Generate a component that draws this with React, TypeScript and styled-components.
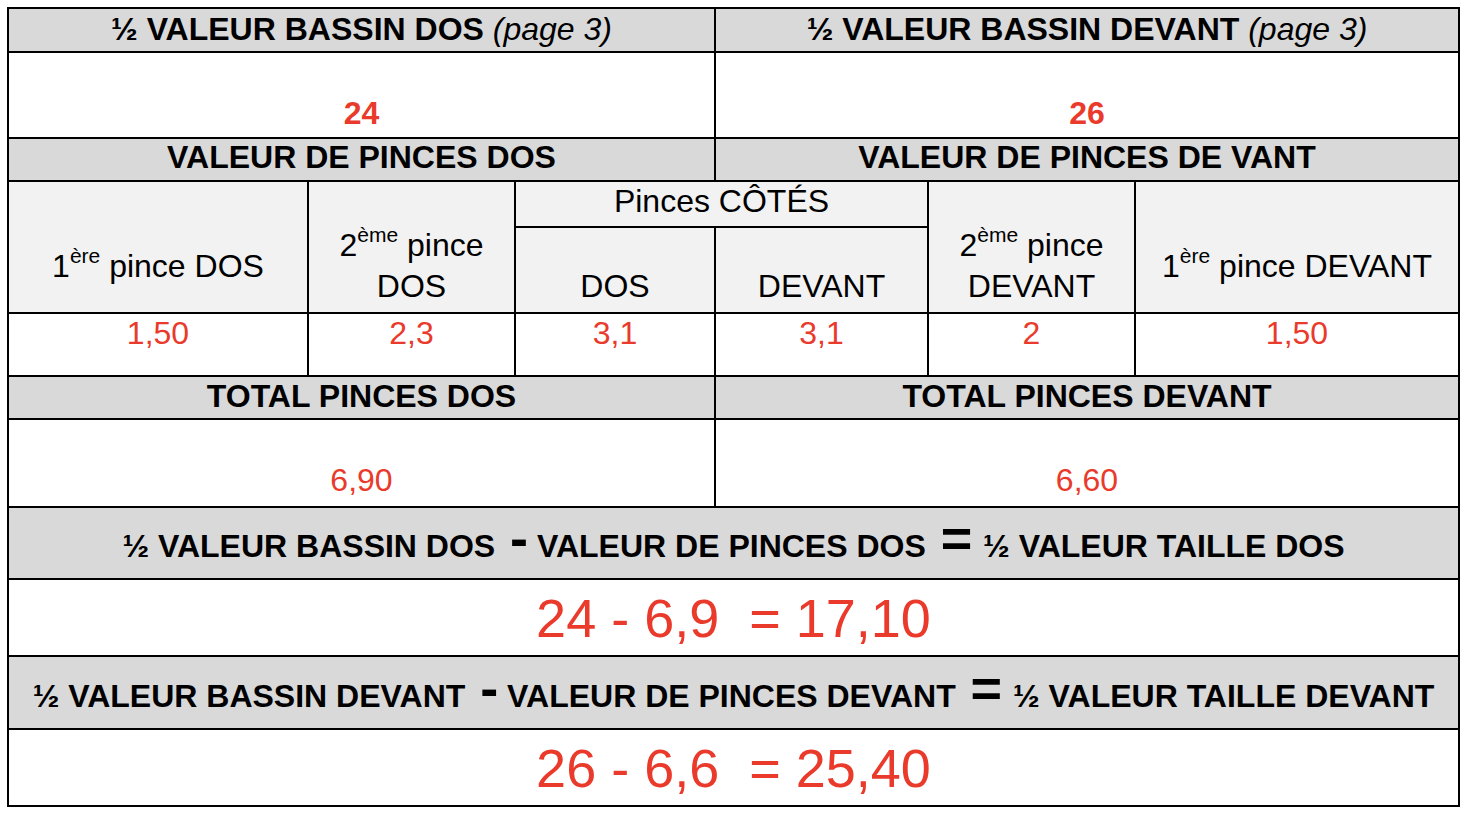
import React from 'react';
import styled, { createGlobalStyle } from 'styled-components';

const GlobalStyle = createGlobalStyle`
  html, body {
    margin: 0;
    padding: 0;
    background: #ffffff;
  }
  body {
    font-family: "Liberation Sans", Arial, sans-serif;
    color: #000000;
  }
`;

const RED = '#e93a2b';

type Tone = 'head' | 'sub' | 'blank';
type VAlign = 'top' | 'middle' | 'bottom';

const Page = styled.div`
  padding: 7px;
`;

const Sheet = styled.div`
  display: grid;
  width: 1453px;
  box-sizing: border-box;
  grid-template-columns: 298px 205px 198px 211px 205px 322px;
  grid-template-rows: 42px 84px 41px 44px 84px 61px 41px 86px 70px 75px 71px 75px;
  gap: 2px;
  padding: 2px;
  background: #000000;
`;

const Cell = styled.div<{
  $tone?: Tone;
  $cols?: number;
  $rows?: number;
  $v?: VAlign;
  $pt?: number;
  $pb?: number;
  $lh?: number;
}>`
  grid-column: span ${p => p.$cols ?? 1};
  grid-row: span ${p => p.$rows ?? 1};
  background: ${p =>
    p.$tone === 'head' ? '#d9d9d9' : p.$tone === 'sub' ? '#f2f2f2' : '#ffffff'};
  display: flex;
  flex-direction: column;
  align-items: center;
  justify-content: ${p =>
    p.$v === 'top' ? 'flex-start' : p.$v === 'bottom' ? 'flex-end' : 'center'};
  padding: ${p => p.$pt ?? 0}px 4px ${p => p.$pb ?? 0}px;
  box-sizing: border-box;
  text-align: center;
  font-size: 32px;
  line-height: ${p => p.$lh ?? 41}px;
  white-space: nowrap;
  overflow: hidden;
`;

const Title = styled.span`
  font-weight: 700;
`;

const PageRef = styled.span`
  font-weight: 400;
  font-style: italic;
`;

const Label = styled.span`
  font-weight: 400;
`;

const Sup = styled.span`
  font-size: 21px;
  line-height: 0;
  vertical-align: 14px;
`;

const Value = styled.span<{ $bold?: boolean }>`
  color: ${RED};
  font-weight: ${p => (p.$bold ? 700 : 400)};
`;

// the minus / equals signs between the terms are set in a much larger bold face
const Op = styled.span<{ $size: number; $ml: number; $mr: number }>`
  font-size: ${p => p.$size}px;
  font-weight: 700;
  line-height: 0;
  margin: 0 ${p => p.$mr}px 0 ${p => p.$ml}px;
`;

const Result = styled.span`
  color: ${RED};
  font-size: 54px;
  line-height: 60px;
  white-space: pre;
`;

const Formula: React.FC<{ left: string; middle: string; right: string }> = ({
  left,
  middle,
  right,
}) => (
  <Title>
    {left}
    <Op $size={54} $ml={6} $mr={0}>-</Op>
    {middle}
    <Op $size={54} $ml={6} $mr={2}>=</Op>
    {right}
  </Title>
);

const pinceValues = ['1,50', '2,3', '3,1', '3,1', '2', '1,50'];

export default function App() {
  return (
    <>
      <GlobalStyle />
      <Page>
        <Sheet>
          <Cell $tone="head" $cols={3} $pb={2}>
            <Title>
              ½ VALEUR BASSIN DOS <PageRef>(page 3)</PageRef>
            </Title>
          </Cell>
          <Cell $tone="head" $cols={3} $pb={2}>
            <Title>
              ½ VALEUR BASSIN DEVANT <PageRef>(page 3)</PageRef>
            </Title>
          </Cell>

          <Cell $cols={3} $v="bottom" $pb={3}>
            <Value $bold>24</Value>
          </Cell>
          <Cell $cols={3} $v="bottom" $pb={3}>
            <Value $bold>26</Value>
          </Cell>

          <Cell $tone="head" $cols={3} $pb={4}>
            <Title>VALEUR DE PINCES DOS</Title>
          </Cell>
          <Cell $tone="head" $cols={3} $pb={4}>
            <Title>VALEUR DE PINCES DE VANT</Title>
          </Cell>

          <Cell $tone="sub" $rows={2} $v="bottom" $pb={25}>
            <Label>
              1<Sup>ère</Sup> pince DOS
            </Label>
          </Cell>
          <Cell $tone="sub" $rows={2} $v="bottom" $pb={5}>
            <Label>
              2<Sup>ème</Sup> pince
              <br />
              DOS
            </Label>
          </Cell>
          <Cell $tone="sub" $cols={2} $v="top" $lh={38}>
            <Label>Pinces CÔTÉS</Label>
          </Cell>
          <Cell $tone="sub" $rows={2} $v="bottom" $pb={5}>
            <Label>
              2<Sup>ème</Sup> pince
              <br />
              DEVANT
            </Label>
          </Cell>
          <Cell $tone="sub" $rows={2} $v="bottom" $pb={25}>
            <Label>
              1<Sup>ère</Sup> pince DEVANT
            </Label>
          </Cell>
          <Cell $tone="sub" $v="bottom" $pb={5}>
            <Label>DOS</Label>
          </Cell>
          <Cell $tone="sub" $v="bottom" $pb={5}>
            <Label>DEVANT</Label>
          </Cell>

          {pinceValues.map((v, i) => (
            <Cell key={i} $v="top" $lh={38}>
              <Value>{v}</Value>
            </Cell>
          ))}

          <Cell $tone="head" $cols={3} $pb={3}>
            <Title>TOTAL PINCES DOS</Title>
          </Cell>
          <Cell $tone="head" $cols={3} $pb={3}>
            <Title>TOTAL PINCES DEVANT</Title>
          </Cell>

          <Cell $cols={3} $v="bottom" $pb={5}>
            <Value>6,90</Value>
          </Cell>
          <Cell $cols={3} $v="bottom" $pb={5}>
            <Value>6,60</Value>
          </Cell>

          <Cell $tone="head" $cols={6} $pt={7}>
            <Formula
              left="½ VALEUR BASSIN DOS "
              middle=" VALEUR DE PINCES DOS "
              right=" ½ VALEUR TAILLE DOS"
            />
          </Cell>
          <Cell $cols={6}>
            <Result>{'24 - 6,9  = 17,10'}</Result>
          </Cell>

          <Cell $tone="head" $cols={6} $pt={7}>
            <Formula
              left="½ VALEUR BASSIN DEVANT "
              middle=" VALEUR DE PINCES DEVANT "
              right=" ½ VALEUR TAILLE DEVANT"
            />
          </Cell>
          <Cell $cols={6}>
            <Result>{'26 - 6,6  = 25,40'}</Result>
          </Cell>
        </Sheet>
      </Page>
    </>
  );
}
